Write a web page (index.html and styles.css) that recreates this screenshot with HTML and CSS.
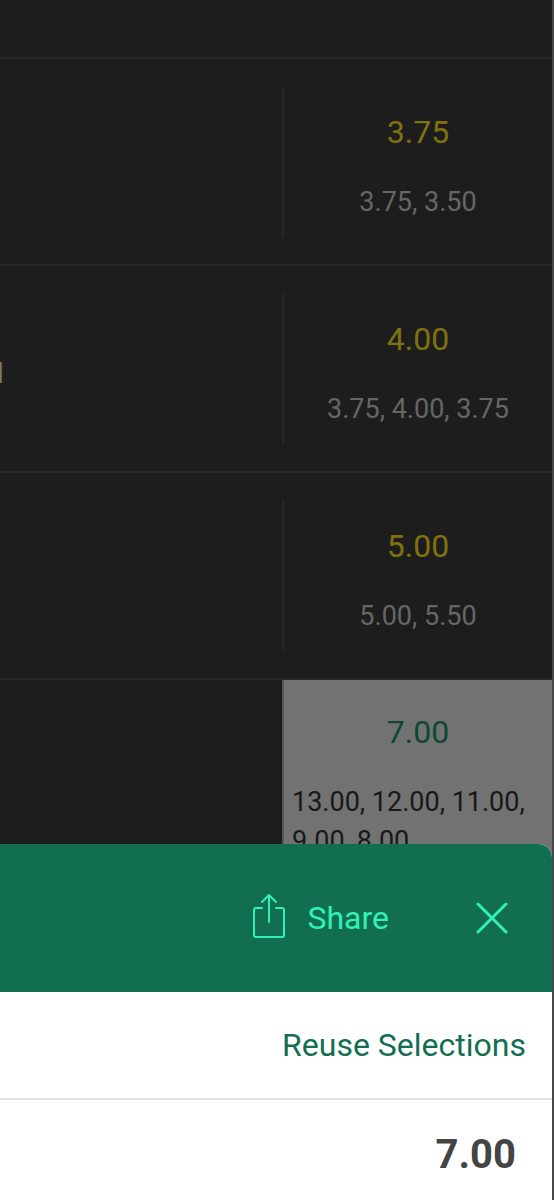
FILE: index.html
```
<!DOCTYPE html>
<html lang="en">
<head>
<meta charset="utf-8">
<meta name="viewport" content="width=device-width, initial-scale=1">
<title>Bet Share</title>
<link rel="stylesheet" href="styles.css">
</head>
<body>
<div class="app">
  <main class="odds">
    <div class="row row-first"></div>
    <div class="row">
      <div class="name"></div>
      <div class="cell"><span class="price">3.75</span><span class="history">3.75, 3.50</span></div>
    </div>
    <div class="row">
      <div class="name">l</div>
      <div class="cell"><span class="price">4.00</span><span class="history">3.75, 4.00, 3.75</span></div>
    </div>
    <div class="row">
      <div class="name"></div>
      <div class="cell"><span class="price">5.00</span><span class="history">5.00, 5.50</span></div>
    </div>
    <div class="row row-selected">
      <div class="name"></div>
      <div class="cell"><span class="price">7.00</span><span class="history">13.00, 12.00, 11.00, 9.00, 8.00</span></div>
    </div>
  </main>
  <section class="sheet">
    <header class="sheet-header">
      <button class="share" type="button">
        <svg class="share-icon" viewBox="0 0 34 46" aria-hidden="true">
          <path d="M10 15H4Q2 15 2 17V42Q2 44 4 44H30Q32 44 32 42V17Q32 15 30 15H24M17 29V3M10 9L17 2L24 9"/>
        </svg>
        Share
      </button>
      <button class="close" type="button" aria-label="Close">
        <svg class="close-icon" viewBox="0 0 32 32" aria-hidden="true"><path d="M2 2L30 30M30 2L2 30"/></svg>
      </button>
    </header>
    <div class="actions"><button class="reuse" type="button">Reuse Selections</button></div>
    <div class="total">7.00</div>
  </section>
</div>
</body>
</html>
```
FILE: styles.css
```
* { box-sizing: border-box; }

body {
  margin: 0;
  background: #1d1d1d;
  font-family: Roboto, "Liberation Sans", sans-serif;
}

button {
  padding: 0;
  border: 0;
  background: none;
  font: inherit;
  color: inherit;
}

.app {
  position: relative;
  height: 100vh;
  overflow: hidden;
  border-right: 2px solid #484848;
}

.row {
  display: grid;
  grid-template-columns: 1fr 270px;
  border-bottom: 2px solid #272727;
}

.row-first { height: 59px; }

.name {
  display: flex;
  align-items: center;
  margin-left: -3px;
  padding-top: 10px;
  font-size: 28px;
  color: #777;
}

.cell {
  display: flex;
  flex-direction: column;
  align-items: center;
  gap: 31px;
  margin: 27px 0;
  padding: 26px 8px 15px;
  border-left: 2px solid #262626;
}

.price {
  font-size: 32px;
  line-height: 40px;
  color: #80720e;
}

.history {
  font-size: 27px;
  line-height: 39px;
  color: #666;
}

.row-selected .cell {
  margin: 0;
  padding: 32px 8px 28px;
  border-left-color: #555;
  background: #727272;
}

.row-selected .price { color: #0e4834; }
.row-selected .history { color: #181818; }

.sheet {
  position: absolute;
  right: 0;
  bottom: 0;
  left: 0;
  overflow: hidden;
  border-top-right-radius: 14px;
  background: #fff;
}

.sheet-header {
  display: flex;
  align-items: center;
  justify-content: flex-end;
  gap: 87px;
  height: 148px;
  padding-right: 44px;
  background: #126e51;
  color: #2ff2b4;
}

.share {
  display: flex;
  align-items: center;
  gap: 21px;
  font-size: 32px;
}

.share-icon,
.close-icon {
  fill: none;
  stroke: currentColor;
  stroke-width: 2;
  stroke-linecap: round;
  stroke-linejoin: round;
}

.share-icon { width: 34px; height: 46px; margin-bottom: 4px; }
.close-icon { display: block; width: 32px; height: 32px; stroke-width: 3; }

.actions {
  display: flex;
  align-items: center;
  justify-content: flex-end;
  height: 108px;
  padding-right: 26px;
  border-bottom: 2px solid #e3e3e3;
  font-size: 32px;
  color: #126e51;
}

.total {
  padding: 31px 36px 21px;
  font-size: 40px;
  font-weight: 700;
  line-height: 48px;
  text-align: right;
  color: #444;
}
```
